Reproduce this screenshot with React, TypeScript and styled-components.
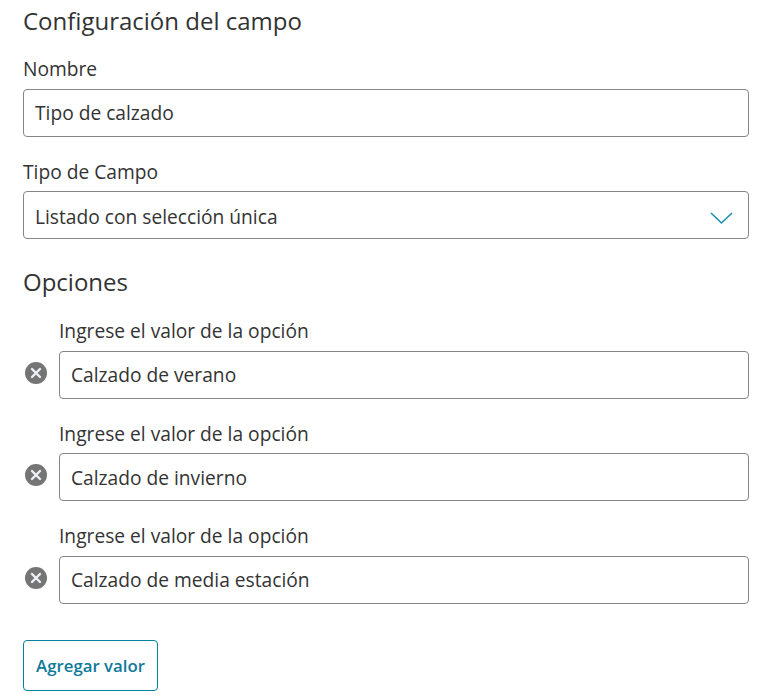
import React from 'react';
import styled, { createGlobalStyle } from 'styled-components';

const GlobalStyle = createGlobalStyle`
  html, body {
    margin: 0;
    padding: 0;
    background: #fff;
  }
  body {
    font-family: "Open Sans", "Liberation Sans", sans-serif;
    color: #333;
  }
`;

const Page = styled.div`
  width: 776px;
  height: 698px;
  box-sizing: border-box;
  padding: 3px 27px 0 23px;
  overflow: hidden;
`;

const Title = styled.h2`
  margin: 0 0 18px;
  font-size: 24px;
  line-height: 36px;
  font-weight: 400;
`;

const SectionTitle = styled(Title)`
  margin: 0 0 21.2px;
  line-height: 32px;
`;

const Field = styled.div<{ $gap: number }>`
  margin-bottom: ${(p) => p.$gap}px;
`;

const Label = styled.label`
  display: block;
  font-size: 19.2px;
  line-height: 24px;
  margin-bottom: 8px;
`;

const SelectLabel = styled(Label)`
  margin-bottom: 7px;
`;

const OptionLabel = styled(Label)`
  margin-bottom: 7.8px;
`;

// $nudge moves the text up or down a pixel inside the box
const TextBox = styled.div<{ $nudge?: number }>`
  position: relative;
  height: 48px;
  box-sizing: border-box;
  display: flex;
  align-items: center;
  padding: ${(p) => (p.$nudge ?? 0) > 0 ? 2 : 0}px 11px ${(p) => (p.$nudge ?? 0) < 0 ? 2 : 0}px;
  border: 1px solid #858585;
  border-radius: 4px;
  font-size: 19.2px;
  background: #fff;
`;

const Chevron = styled.svg`
  position: absolute;
  right: 15px;
  top: 19px;
`;

const OptionRow = styled.div`
  display: flex;
  align-items: flex-end;
  gap: 12px;
  margin-bottom: 22.7px;
`;

const RemoveIcon = styled.svg`
  flex: none;
  margin: 0 0 15px 2px;
`;

const OptionField = styled.div`
  flex: 1;
`;

const AddButton = styled.button`
  display: block;
  margin-top: 36px;
  width: 135px;
  height: 51px;
  background: #fff;
  border: 1px solid #00809d;
  border-radius: 4px;
  color: #0f7a98;
  font-family: inherit;
  font-size: 16.8px;
  font-weight: 600;
  padding: 0;
`;

const options = ['Calzado de verano', 'Calzado de invierno', 'Calzado de media estación'];

export default function App() {
  return (
    <Page>
      <GlobalStyle />
      <Title>Configuración del campo</Title>
      <Field $gap={23}>
        <Label>Nombre</Label>
        <TextBox $nudge={-1}>Tipo de calzado</TextBox>
      </Field>
      <Field $gap={26.9}>
        <SelectLabel>Tipo de Campo</SelectLabel>
        <TextBox $nudge={1}>
          Listado con selección única
          <Chevron width="24" height="14" viewBox="0 0 24 14" fill="none">
            <path d="M2 2l10.5 10L23 2" stroke="#1a8fb0" strokeWidth="1.6" />
          </Chevron>
        </TextBox>
      </Field>
      <SectionTitle>Opciones</SectionTitle>
      {options.map((value) => (
        <OptionRow key={value}>
          <RemoveIcon width="22" height="22" viewBox="0 0 22 22">
            <circle cx="11" cy="11" r="11" fill="#757575" />
            <path d="M7 7l8 8M15 7l-8 8" stroke="#eef2f5" strokeWidth="2.4" strokeLinecap="round" />
          </RemoveIcon>
          <OptionField>
            <OptionLabel>Ingrese el valor de la opción</OptionLabel>
            <TextBox>{value}</TextBox>
          </OptionField>
        </OptionRow>
      ))}
      <AddButton>Agregar valor</AddButton>
    </Page>
  );
}
